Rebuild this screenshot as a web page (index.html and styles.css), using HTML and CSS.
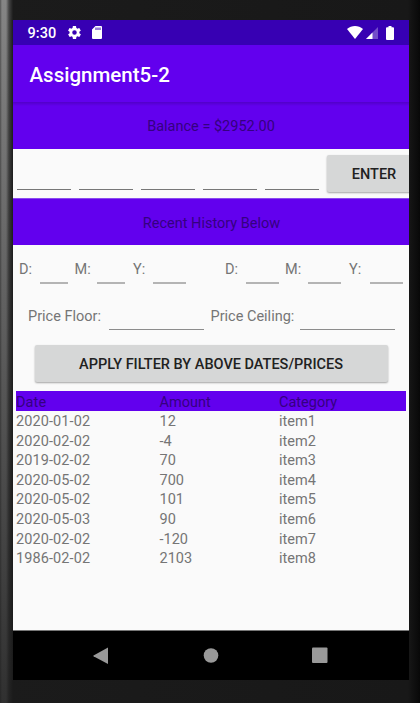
FILE: index.html
```html
<!DOCTYPE html>
<html lang="en">
<head>
<meta charset="utf-8">
<title>Assignment5-2</title>
<link rel="stylesheet" href="styles.css">
</head>
<body>
<div class="device">
<main class="screen">
  <header class="status">
    <span class="time">9:30</span>
    <svg class="gear" viewBox="2 2 20 20"><path d="M19.4 13c.1-.7.1-1.300 0-2l2.100-1.650a.5.5 0 0 0 .1-.6l-2-3.460a.5.5 0 0 0-.6-.2l-2.500 1a7 7 0 0 0-1.700-1L14.400 2.400a.5.500 0 0 0-.5-.4h-4a.5.500 0 0 0-.5.400L9 5.100a7 7 0 0 0-1.700 1l-2.500-1a.5.5 0 0 0-.6.200l-2 3.460a.5.5 0 0 0 .1.600L4.500 11c-.1.700-.1 1.300 0 2l-2.100 1.650a.5.5 0 0 0-.1.600l2 3.460c.1.200.4.300.6.200l2.500-1a7 7 0 0 0 1.700 1l.4 2.650c0 .2.200.4.500.4h4c.3 0 .5-.2.500-.4l.4-2.650a7 7 0 0 0 1.700-1l2.500 1c.2.100.5 0 .6-.2l2-3.460a.5.5 0 0 0-.1-.600zM12 8.500a3.500 3.500 0 1 1 0 7 3.500 3.500 0 0 1 0-7z" fill-rule="evenodd"/></svg>
    <svg class="card" viewBox="0 0 10 13"><path fill-rule="evenodd" d="M3.500 0H9q1 0 1 1v11q0 1-1 1H1q-1 0-1-1V3.500zM3.500 1.500v2.500h1V1.500zM5.500 1.500v2.500h1V1.500zM7.500 1.500v2.500h1V1.500z"/></svg>
    <svg class="wifi" viewBox="0 0 16 13"><path d="M8 13 0 3.100C4.500-1 11.500-1 16 3.100z"/></svg>
    <svg class="signal" viewBox="0 0 12 12"><path opacity=".3" d="M0 12 12 0v12z"/><path d="M0 12 6.500 5.500V12z"/></svg>
    <svg class="battery" viewBox="0 0 8 14"><path d="M2.500 0h3v1.200H7q1 0 1 1V13q0 1-1 1H1q-1 0-1-1V2.200q0-1 1-1h1.500z"/></svg>
  </header>
  <h1 class="appbar">Assignment5-2</h1>
  <div class="band balance">Balance = $2952.00</div>
  <form class="entry">
    <input aria-label="Day"><input aria-label="Month"><input aria-label="Year"><input aria-label="Amount"><input aria-label="Category">
    <button type="button" class="btn enter">ENTER</button>
  </form>
  <div class="band history">Recent History Below</div>
  <div class="dates">
    <div class="range from"><label>D:</label><input aria-label="From day"><label>M:</label><input aria-label="From month"><label>Y:</label><input aria-label="From year"></div>
    <div class="range to"><label>D:</label><input aria-label="To day"><label>M:</label><input aria-label="To month"><label>Y:</label><input aria-label="To year"></div>
  </div>
  <div class="prices">
    <label>Price Floor:</label><input aria-label="Price floor"><label>Price Ceiling:</label><input aria-label="Price ceiling">
  </div>
  <button type="button" class="btn apply">APPLY FILTER BY ABOVE DATES/PRICES</button>
  <section class="table">
    <div class="row head"><span>Date</span><span>Amount</span><span>Category</span></div>
    <div class="row"><span>2020-01-02</span><span>12</span><span>item1</span></div>
    <div class="row"><span>2020-02-02</span><span>-4</span><span>item2</span></div>
    <div class="row"><span>2019-02-02</span><span>70</span><span>item3</span></div>
    <div class="row"><span>2020-05-02</span><span>700</span><span>item4</span></div>
    <div class="row"><span>2020-05-02</span><span>101</span><span>item5</span></div>
    <div class="row"><span>2020-05-03</span><span>90</span><span>item6</span></div>
    <div class="row"><span>2020-02-02</span><span>-120</span><span>item7</span></div>
    <div class="row"><span>1986-02-02</span><span>2103</span><span>item8</span></div>
  </section>
  <nav class="nav">
    <svg viewBox="0 0 16 18"><path d="M15 .5v16.500L.500 9.200Q0 8.800.5 8.400z"/></svg>
    <svg viewBox="0 0 16 18"><circle cx="8" cy="8.500" r="7.300"/></svg>
    <svg viewBox="0 0 16 18"><rect y=".5" width="15.500" height="15.500" rx="1"/></svg>
  </nav>
</main>
</div>
</body>
</html>
```
FILE: styles.css
```css
* { box-sizing: border-box; }
body { margin: 0; font-family: Roboto, sans-serif; font-size: 14.5px; color: #757575; }
.device {
  width: 420px; height: 703px; padding: 20px 11px 23px 13px; overflow: hidden;
  background:
    linear-gradient(180deg, transparent, rgba(27,27,27,.8) 100%) 0 0 / 13px 100% no-repeat,
    linear-gradient(90deg, #555 0, #858585 2px, #858585 6px, #444 9px, #1c1c1c 13px) 0 0 / 13px 100% no-repeat,
    linear-gradient(90deg, #1b1b1b 0, #181818 408px, #111 413px, #080808 420px);
}
.screen { height: 660px; background: #fafafa; display: flex; flex-direction: column; overflow: hidden; }
.status { height: 25px; flex: none; background: #3700b3; color: #fff; display: flex; align-items: center; padding: 0 15px 0 14.5px; }
.status svg { fill: #fff; flex: none; }
.time { width: 40.5px; font-weight: 500; font-size: 14.5px; letter-spacing: .1px; padding-top: 1px; }
.gear { width: 13px; height: 13px; }
.card { width: 10px; height: 13px; margin-left: 11px; }
.wifi { width: 16px; height: 13px; margin-left: auto; }
.signal { width: 12px; height: 12px; margin: 1px 8px 0 3px; }
.battery { width: 8px; height: 14px; }
.appbar { flex: none; height: 57px; margin: 0; padding: 2px 0 0 16.5px; background: #6200ee; color: #fff; font-size: 20.5px; font-weight: 500; line-height: 57px; }
.band { flex: none; background: #6200ee; color: #350080; text-align: center; }
.balance { height: 47px; line-height: 50px; background: linear-gradient(#5200c8, #6200ee 4px); }
.history { height: 46px; line-height: 49px; padding-left: 1px; }
input { min-width: 0; flex: none; padding: 0; border: 0; border-bottom: 1px solid #777; background: none; border-radius: 0; outline: 0; }
.entry { flex: none; height: 50px; display: flex; padding: 6px 0 0 4px; border-bottom: 1px solid #8a4aee; }
.entry input { width: 54px; height: 35px; margin-right: 8px; }
.btn { flex: none; border: 0; border-radius: 2px; background: #d6d7d7; color: #212121; font: 500 14.5px Roboto, sans-serif; padding: 2px 0 0; box-shadow: 0 1px 2px rgba(0,0,0,.35); white-space: nowrap; }
.enter { width: 94px; height: 37px; }
.dates, .prices { flex: none; display: flex; }
.dates { height: 48px; line-height: 50px; }
.range { display: grid; align-items: start; }
.range input { height: 39px; border-bottom: 2px solid #b4b4b4; }
.range label:nth-of-type(2) { padding-left: 6.5px; }
.range label:nth-of-type(3) { padding-left: 8.5px; }
.from { grid-template-columns: 21px 28px 28.5px 28px 28.5px 33px; padding-left: 6px; }
.to { grid-template-columns: 20.5px 33px 29px 33px 29px 33px; margin-left: 39px; }
.prices { line-height: 48px; height: 52px; padding-left: 15px; }
.prices input { width: 95px; height: 37px; border-bottom: 1px solid #8c8c8c; }
.prices label:nth-of-type(1) { width: 81px; }
.prices label:nth-of-type(2) { width: 96px; padding-left: 6.5px; }
.apply { width: 353px; height: 37px; margin-left: 21.5px; }
.table { margin: 9px 0 0 3px; width: 390px; line-height: 22.6px; }
.row { height: 19.6px; display: grid; grid-template-columns: 143.5px 119.5px 1fr; }
.row span:first-child { letter-spacing: .1px; }
.head { background: #6200ee; color: #350080; height: 20px; line-height: 24px; }
.nav { flex: none; margin-top: auto; height: 50px; border-top: 1px solid #777; background: #000; display: flex; align-items: center; justify-content: space-between; padding: 0 81px 0 80px; }
.nav svg { width: 16px; height: 18px; fill: #999; }
```
